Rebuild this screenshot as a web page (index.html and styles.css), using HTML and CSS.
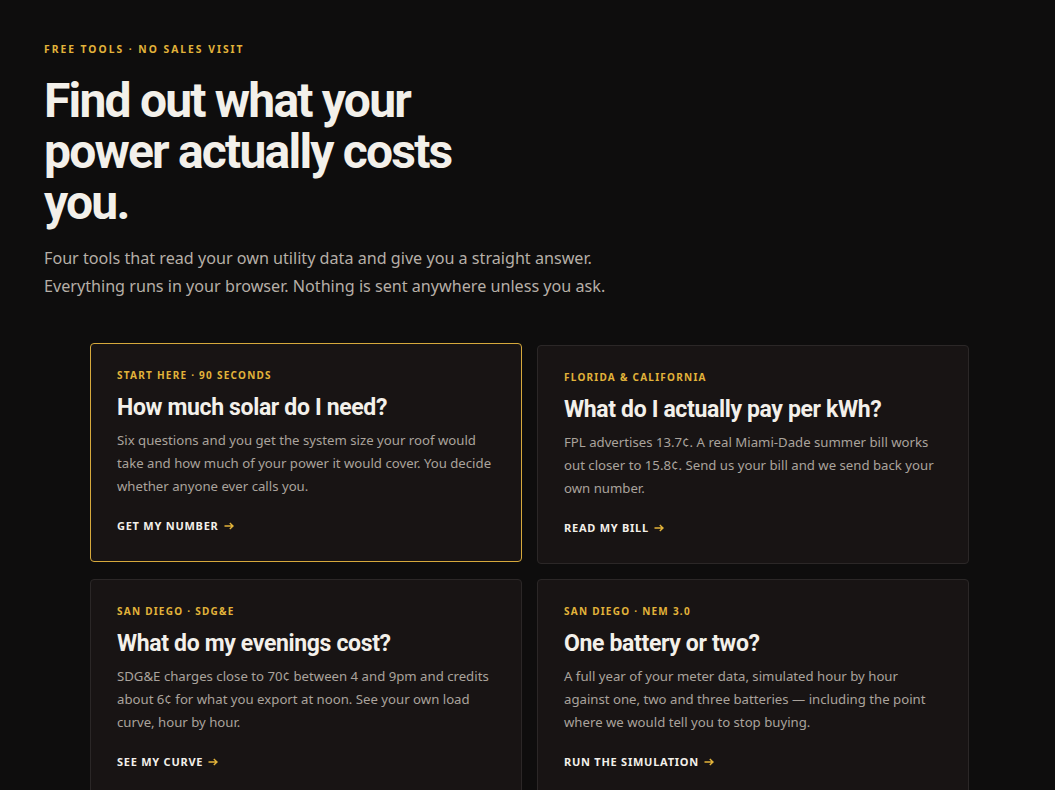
FILE: index.html
```html
<!DOCTYPE html>
<html lang="en">
<head>
<meta charset="utf-8">
<title>Free tools</title>
<link rel="stylesheet" href="styles.css">
</head>
<body>
<main class="page">
  <header class="intro">
    <p class="eyebrow">Free tools · No sales visit</p>
    <h1 class="headline">Find out what your power actually costs you.</h1>
    <p class="lede">Four tools that read your own utility data and give you a straight answer.<br>Everything runs in your browser. Nothing is sent anywhere unless you ask.</p>
  </header>
  <section class="tools">
    <a class="card is-active" href="#">
      <span class="card-label">Start here · 90 seconds</span>
      <h2 class="card-title">How much solar do I need?</h2>
      <p class="card-text">Six questions and you get the system size your roof would take and how much of your power it would cover. You decide whether anyone ever calls you.</p>
      <span class="card-cta">Get my number <svg class="arrow" viewBox="0 0 10 8" width="10" height="8" aria-hidden="true"><path d="M0.5 4H9M5.8 0.9L9 4L5.8 7.1" fill="none" stroke="currentColor" stroke-width="1.4"/></svg></span>
    </a>
    <a class="card" href="#">
      <span class="card-label">Florida &amp; California</span>
      <h2 class="card-title">What do I actually pay per kWh?</h2>
      <p class="card-text">FPL advertises 13.7¢. A real Miami-Dade summer bill works out closer to 15.8¢. Send us your bill and we send back your own number.</p>
      <span class="card-cta">Read my bill <svg class="arrow" viewBox="0 0 10 8" width="10" height="8" aria-hidden="true"><path d="M0.5 4H9M5.8 0.9L9 4L5.8 7.1" fill="none" stroke="currentColor" stroke-width="1.4"/></svg></span>
    </a>
    <a class="card" href="#">
      <span class="card-label">San Diego · SDG&amp;E</span>
      <h2 class="card-title">What do my evenings cost?</h2>
      <p class="card-text">SDG&amp;E charges close to 70¢ between 4 and 9pm and credits about 6¢ for what you export at noon. See your own load curve, hour by hour.</p>
      <span class="card-cta">See my curve <svg class="arrow" viewBox="0 0 10 8" width="10" height="8" aria-hidden="true"><path d="M0.5 4H9M5.8 0.9L9 4L5.8 7.1" fill="none" stroke="currentColor" stroke-width="1.4"/></svg></span>
    </a>
    <a class="card" href="#">
      <span class="card-label">San Diego · NEM 3.0</span>
      <h2 class="card-title">One battery or two?</h2>
      <p class="card-text">A full year of your meter data, simulated hour by hour against one, two and three batteries — including the point where we would tell you to stop buying.</p>
      <span class="card-cta">Run the simulation <svg class="arrow" viewBox="0 0 10 8" width="10" height="8" aria-hidden="true"><path d="M0.5 4H9M5.8 0.9L9 4L5.8 7.1" fill="none" stroke="currentColor" stroke-width="1.4"/></svg></span>
    </a>
  </section>
</main>
</body>
</html>
```
FILE: styles.css
```css
* { box-sizing: border-box; }
html, body { margin: 0; padding: 0; }
body {
  background: #0e0d0d;
  color: #f2efe9;
  font-family: "Noto Sans", "Roboto", sans-serif;
  overflow: hidden;
}
.page {
  padding: 42px 44px 40px;
}
.intro {
  max-width: 640px;
}
.eyebrow {
  margin: 0;
  font-size: 10.3px;
  font-weight: 700;
  letter-spacing: 2px;
  text-transform: uppercase;
  color: #e2b33a;
  line-height: 14px;
}
.headline {
  margin: 19px 0 0;
  max-width: 420px;
  font-family: "Roboto", sans-serif;
  font-size: 48px;
  font-weight: 700;
  line-height: 51px;
  letter-spacing: -1.8px;
  color: #f3f0ea;
}
.lede {
  margin: 16px 0 0;
  font-size: 16.15px;
  line-height: 28px;
  color: #b6afa7;
}
.tools {
  max-width: 879px;
  margin: 45px 0 0 46px;
  display: grid;
  grid-template-columns: 1fr 1fr;
  gap: 15px;
}
.card {
  display: flex;
  flex-direction: column;
  align-items: flex-start;
  padding: 24px 26px 27px;
  background: #181414;
  border: 1px solid #2b2727;
  border-radius: 4px;
  text-decoration: none;
  color: inherit;
}
.card.is-active {
  border-color: #d6a93c;
  transform: translateY(-2px);
}
.card-label {
  font-size: 10px;
  font-weight: 700;
  letter-spacing: 1.25px;
  text-transform: uppercase;
  color: #e2b33a;
  line-height: 14px;
}
.card-title {
  margin: 11px 0 0;
  font-family: "Roboto", sans-serif;
  font-size: 23px;
  font-weight: 700;
  line-height: 30px;
  letter-spacing: -0.35px;
  color: #f3f0ea;
}
.card-text {
  margin: 6px 0 0;
  font-size: 13.2px;
  line-height: 23px;
  color: #aaa39c;
}
.card-cta {
  display: inline-flex;
  align-items: center;
  gap: 5px;
  margin-top: 20px;
  font-size: 11px;
  font-weight: 700;
  letter-spacing: 0.75px;
  text-transform: uppercase;
  color: #f3f0ea;
  line-height: 16px;
}
.arrow {
  color: #e2b33a;
  display: block;
}
```
